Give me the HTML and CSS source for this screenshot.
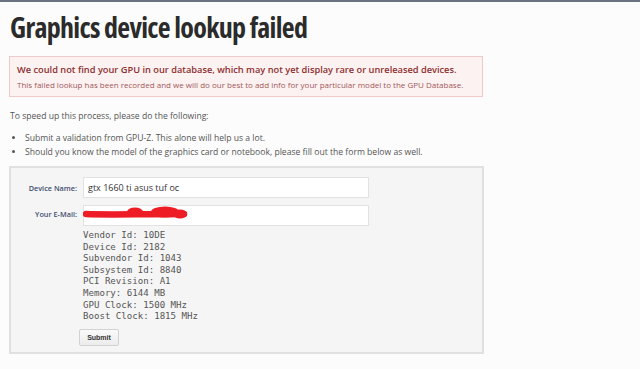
FILE: index.html
```html
<!DOCTYPE html>
<html lang="en">
<head>
  <meta charset="UTF-8" />
  <title>Graphics device lookup failed</title>
  <link rel="stylesheet" href="styles.css">
</head>
<body>
  <div class="page">
    <h1>Graphics device lookup failed</h1>

    <div class="alert">
      <p class="alert-title">We could not find your GPU in our database, which may not yet display rare or unreleased devices.</p>
      <p class="alert-text">This failed lookup has been recorded and we will do our best to add info for your particular model to the GPU Database.</p>
    </div>

    <p class="intro">To speed up this process, please do the following:</p>
    <ul class="steps">
      <li>Submit a validation from GPU-Z. This alone will help us a lot.</li>
      <li>Should you know the model of the graphics card or notebook, please fill out the form below as well.</li>
    </ul>

    <form class="device-form" onsubmit="event.preventDefault()">
      <div class="row">
        <label for="devname">Device Name:</label>
        <input type="text" id="devname" value="gtx 1660 ti asus tuf oc">
      </div>
      <div class="row">
        <label for="email">Your E-Mail:</label>
        <div class="email-wrap">
          <input type="text" id="email" value="">
          <!-- redacted address -->
          <svg class="scribble" width="110" height="16" viewBox="0 0 110 16">
            <path d="M3 9 C 25 10, 50 9, 101 9" stroke="#ee1c24" stroke-width="6.5" fill="none" stroke-linecap="round"/>
            <ellipse cx="52" cy="7" rx="8" ry="4.5" fill="#ee1c24"/>
            <ellipse cx="82" cy="7" rx="14" ry="5.5" fill="#ee1c24"/>
            <ellipse cx="97" cy="9" rx="7" ry="4.5" fill="#ee1c24"/>
          </svg>
        </div>
      </div>
      <pre class="ids">Vendor Id: 10DE
Device Id: 2182
Subvendor Id: 1043
Subsystem Id: 8840
PCI Revision: A1
Memory: 6144 MB
GPU Clock: 1500 MHz
Boost Clock: 1815 MHz</pre>
      <button type="submit">Submit</button>
    </form>
  </div>
</body>
</html>
```

FILE: styles.css
```css
* {
  box-sizing: border-box;
  margin: 0;
  padding: 0;
}

body {
  background: #fcfcfc;
  border-top: 2px solid #6b7380;
  font-family: 'Open Sans', sans-serif;
  color: #555;
}

.page {
  padding: 8px 0 0 9px;
  width: 485px;
}

h1 {
  font-family: 'Open Sans', sans-serif;
  font-stretch: 75%;
  font-weight: 700;
  font-size: 28px;
  line-height: 34px;
  color: #2b2b2b;
  padding-left: 1px;
  letter-spacing: -0.7px;
}

.alert {
  margin-top: 12px;
  height: 41px;
  width: 474px;
  background: #fdf2f2;
  border: 1px solid #eecaca;
  padding: 6px 7px 0;
}

.alert-title {
  font-size: 9.25px;
  font-weight: 600;
  color: #8c2f2f;
  line-height: 14px;
}

.alert-text {
  font-size: 8px;
  color: #a05858;
  line-height: 12px;
  margin-top: 2px;
}

.intro {
  font-size: 8.6px;
  line-height: 12px;
  margin-top: 13px;
  padding-left: 1px;
}

.steps {
  list-style: disc;
  margin-top: 9px;
  padding-left: 16px;
  font-size: 8.6px;
  line-height: 14px;
}

.device-form {
  margin-top: 7px;
  width: 475px;
  height: 188px;
  background: #f5f5f5;
  border: 2px solid #e0e0e0;
  padding: 9px 0 0 0;
}

.row {
  display: flex;
  align-items: center;
  margin-bottom: 4px;
}

.row label {
  width: 72px;
  text-align: right;
  padding-right: 6px;
  font-size: 7.3px;
  font-weight: 600;
  color: #3f4f70;
}

.row input {
  width: 286px;
  height: 21px;
  border: 1px solid #e2e2e2;
  background: #fff;
  padding: 0 4px;
  font-family: 'Open Sans', sans-serif;
  font-size: 9px;
  color: #333;
  outline: none;
}

.email-wrap {
  position: relative;
}

.scribble {
  position: absolute;
  left: 0;
  top: 3px;
}

.ids {
  font-family: 'DejaVu Sans Mono', monospace;
  font-size: 9.1px;
  line-height: 11.6px;
  color: #555;
  margin: 3px 0 0 72px;
}

button {
  margin: 3px 0 0 68px;
  width: 40px;
  height: 17px;
  font-family: 'Liberation Sans', sans-serif;
  font-size: 7px;
  font-weight: 700;
  color: #333;
  background: linear-gradient(#fafafa, #ececec);
  border: 1px solid #d2d2d2;
  border-radius: 2px;
}
```
